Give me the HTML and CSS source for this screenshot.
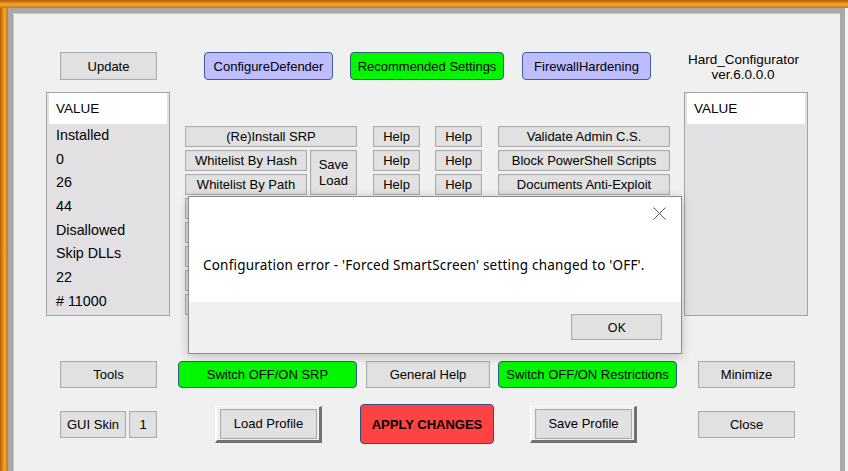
FILE: index.html
```html
<!DOCTYPE html>
<html lang="en">
<head>
  <meta charset="UTF-8" />
  <title>Hard_Configurator</title>
  <link rel="stylesheet" href="styles.css">
</head>
<body>
  <div class="frame">
    <div class="window">

      <!-- top buttons -->
      <div class="row top-bar">
        <button class="btn update">Update</button>
        <button class="btn btn-blue defender">ConfigureDefender</button>
        <button class="btn btn-green recommended">Recommended Settings</button>
        <button class="btn btn-blue firewall">FirewallHardening</button>
        <div class="app-title">Hard_Configurator<br>ver.6.0.0.0</div>
      </div>

      <!-- lists + action grid -->
      <div class="row main">
        <div class="listbox">
          <div class="listbox-head">VALUE</div>
          <div class="listbox-item">Installed</div>
          <div class="listbox-item">0</div>
          <div class="listbox-item">26</div>
          <div class="listbox-item">44</div>
          <div class="listbox-item">Disallowed</div>
          <div class="listbox-item">Skip DLLs</div>
          <div class="listbox-item">22</div>
          <div class="listbox-item"># 11000</div>
        </div>

        <div class="actions">
          <button class="btn reinstall">(Re)Install SRP</button>
          <button class="btn help">Help</button>
          <button class="btn help">Help</button>
          <button class="btn wide">Validate Admin C.S.</button>

          <button class="btn">Whitelist By Hash</button>
          <button class="btn save-load">Save<br>Load</button>
          <button class="btn help">Help</button>
          <button class="btn help">Help</button>
          <button class="btn wide">Block PowerShell Scripts</button>

          <button class="btn">Whitelist By Path</button>
          <button class="btn help">Help</button>
          <button class="btn help">Help</button>
          <button class="btn wide">Documents Anti-Exploit</button>

          <!-- rows hidden behind the message box -->
          <button class="btn under"></button>
          <button class="btn under"></button>
          <button class="btn under"></button>
          <button class="btn under"></button>
          <button class="btn under"></button>
        </div>

        <div class="listbox listbox-right">
          <div class="listbox-head">VALUE</div>
        </div>
      </div>

      <!-- bottom buttons -->
      <div class="row tools-bar">
        <button class="btn tools">Tools</button>
        <button class="btn btn-green switch-srp">Switch OFF/ON SRP</button>
        <button class="btn general-help">General Help</button>
        <button class="btn btn-green switch-restr">Switch OFF/ON Restrictions</button>
        <button class="btn minimize">Minimize</button>
      </div>

      <div class="row profile-bar">
        <button class="btn gui-skin">GUI Skin</button>
        <button class="btn skin-num">1</button>
        <div class="btn-frame load-profile"><button class="btn">Load Profile</button></div>
        <button class="btn btn-red apply">APPLY CHANGES</button>
        <div class="btn-frame save-profile"><button class="btn">Save Profile</button></div>
        <button class="btn close">Close</button>
      </div>
    </div>

    <!-- message box -->
    <div class="dialog">
      <svg class="dialog-x" width="13" height="13" viewBox="0 0 13 13">
        <path d="M0.5 0.5 L12.5 12.5 M12.5 0.5 L0.5 12.5" stroke="#5a5a5a" stroke-width="1" fill="none"/>
      </svg>
      <div class="dialog-body">Configuration error - 'Forced SmartScreen' setting changed to 'OFF'.</div>
      <div class="dialog-footer">
        <button class="btn ok">OK</button>
      </div>
    </div>
  </div>
</body>
</html>
```

FILE: styles.css
```css
* { box-sizing: border-box; }

body {
  margin: 0;
  background: #f0f0f0;
  font-family: "Liberation Sans", Arial, sans-serif;
  font-size: 13px;
  color: #000;
}

/* window frame with orange edge */
.frame {
  position: relative;
  width: 848px;
  height: 471px;
  overflow: hidden;
  padding: 8px 3px 0 8px;
  background:
    linear-gradient(to bottom, #b65a06, #f5a526 55%, #d27410) 0 0 / 100% 8px no-repeat,
    linear-gradient(to right, #b65a06, #f5a526 55%, #d27410) 0 0 / 8px 100% no-repeat,
    #f4f4f4;
}

.window {
  height: 100%;
  background: #f0f0f0;
  border: 5px solid #a9a9a9;
  border-bottom: 0;
  padding-top: 39px;
  box-shadow: inset 1px 1px 0 #c8c8c8;
}

.row { display: flex; }

/* buttons */
.btn {
  display: flex;
  align-items: center;
  justify-content: center;
  height: 28px;
  padding: 0;
  margin: 0;
  font: inherit;
  color: #000;
  white-space: nowrap;
  background: #e1e1e1;
  border: 1px solid #adadad;
  box-shadow: inset 0 0 0 1px #d9d9d9;
}

.btn-blue {
  background: #bdbdff;
  border-color: #3d5d98;
  border-radius: 4px;
  box-shadow: none;
}
.btn-green {
  background: #00f700;
  border-color: #2f5c78;
  border-radius: 4px;
  box-shadow: none;
}
.btn-red {
  background: #ff4343;
  border-color: #2f4f8a;
  border-radius: 4px;
  box-shadow: none;
  font-weight: bold;
}

/* top bar */
.top-bar { height: 28px; align-items: flex-start; }
.update { margin-left: 47px; width: 97px; }
.defender { margin-left: 47px; width: 129px; }
.recommended { margin-left: 17px; width: 154px; }
.firewall { margin-left: 18px; width: 129px; }
.app-title {
  margin-left: 37px;
  width: 110px;
  text-align: center;
  line-height: 15px;
  font-size: 13.5px;
}

/* middle */
.main { margin-top: 12px; height: 224px; align-items: flex-start; }

.listbox {
  margin-left: 33px;
  width: 124px;
  height: 224px;
  padding: 0 2px;
  background: #e2e0e2;
  border: 1px solid #a3a3a3;
  font-size: 14.3px;
}
.listbox-right { margin-left: 14px; }

.listbox-head {
  height: 31px;
  line-height: 31px;
  padding-left: 7px;
  background: #fff;
  font-size: 13.5px;
}
.listbox-item {
  height: 23.7px;
  line-height: 23.7px;
  padding-left: 7px;
}

.actions {
  margin: 34px 0 0 15px;
  width: 485px;
  display: grid;
  grid-template-columns: 122px 50px 63px 62px 188px;
  grid-auto-rows: 21px;
  row-gap: 3px;
}
.actions .btn { height: 100%; }
.reinstall { grid-column: 1 / span 2; }
.help { grid-column: auto; justify-self: end; width: 47px; }
.wide { justify-self: end; width: 172px; }
.save-load {
  grid-column: 2;
  grid-row: 2 / span 2;
  justify-self: end;
  width: 47px;
  line-height: 16px;
  padding-top: 1px;
}
.under { grid-column: 1 / span 2; }

/* bottom bars */
.tools-bar { margin-top: 45px; height: 27px; }
.tools-bar .btn { height: 27px; }
.tools { margin-left: 47px; width: 97px; }
.switch-srp { margin-left: 21px; width: 179px; }
.general-help { margin-left: 9px; width: 124px; }
.switch-restr { margin-left: 8px; width: 179px; }
.minimize { margin-left: 21px; width: 97px; }

.profile-bar { margin-top: 16px; height: 40px; align-items: center; }
.profile-bar > .btn { height: 27px; }
.gui-skin { margin-left: 47px; width: 66px; }
.skin-num { margin-left: 3px; width: 28px; }
.btn-frame {
  width: 107px;
  height: 37px;
  padding: 2px 2px 1px 3px;
  background: #f0f0f0;
  border-style: solid;
  border-width: 1px 3px 3px 2px;
  border-color: #fcfcfc #717171 #717171 #fcfcfc;
}
.btn-frame .btn { width: 100%; height: 100%; }
.load-profile { margin-left: 58px; }
.apply { margin-left: 38px; width: 134px; height: 40px !important; }
.save-profile { margin-left: 36px; }
.close { margin-left: 61px; width: 97px; }

/* message box */
.dialog {
  position: absolute;
  left: 188px;
  top: 196px;
  width: 494px;
  height: 158px;
  background: #fff;
  border: 1px solid #8c8c8c;
  box-shadow: 0 2px 10px rgba(0, 0, 0, 0.22);
  font-family: "Noto Sans", "Open Sans", sans-serif;
  font-size: 13.5px;
}
.dialog-x { position: absolute; top: 10px; right: 15px; }
.dialog-body {
  height: 105px;
  padding: 59px 0 0 14px;
  line-height: 18px;
  letter-spacing: 0.2px;
}
.dialog-footer {
  height: 51px;
  background: #f0f0f0;
  display: flex;
  justify-content: flex-end;
  padding: 12px 19px 0 0;
}
.ok { width: 91px; height: 26px; font-family: inherit; font-size: 13px; }
```
